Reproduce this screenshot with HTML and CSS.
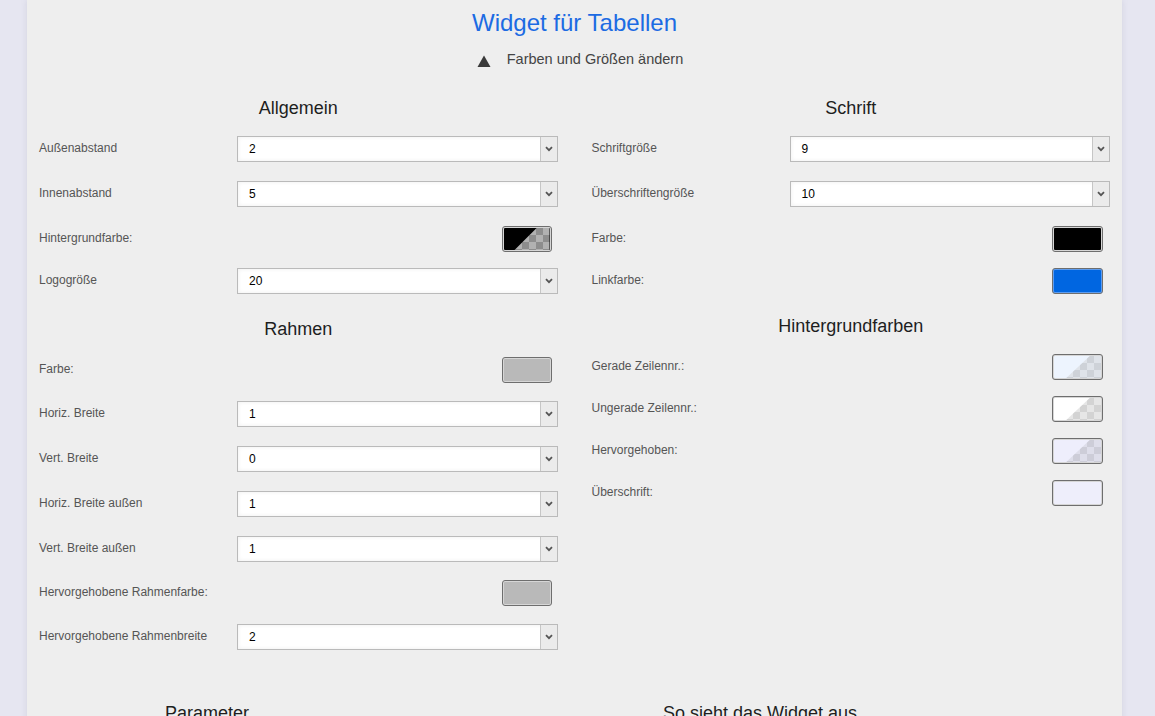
FILE: index.html
```html
<!DOCTYPE html>
<html lang="de">
<head>
<meta charset="utf-8">
<title>Widget für Tabellen</title>
<link rel="stylesheet" href="styles.css">
</head>
<body>
<div class="panel">
  <h1 class="title">Widget für Tabellen</h1>
  <div class="toggle"><svg class="toggle-arrow" width="14" height="12" viewBox="0 0 14 12"><polygon points="7,0.5 13.5,12 0.5,12" fill="#3a3a3a"/></svg><span>Farben und Größen ändern</span></div>

  <div class="columns">
    <div class="col">
      <h2 class="sec">Allgemein</h2>
      <div class="row"><span class="lbl">Außenabstand</span><div class="select"><span class="val">2</span><span class="arrow"><svg width="8" height="6" viewBox="0 0 8 6"><path d="M1 1.2 L4 4.2 L7 1.2" fill="none" stroke="#555" stroke-width="1.8"/></svg></span></div></div>
      <div class="row"><span class="lbl">Innenabstand</span><div class="select"><span class="val">5</span><span class="arrow"><svg width="8" height="6" viewBox="0 0 8 6"><path d="M1 1.2 L4 4.2 L7 1.2" fill="none" stroke="#555" stroke-width="1.8"/></svg></span></div></div>
      <div class="row row--swatch"><span class="lbl">Hintergrundfarbe:</span><div class="swatch"><div class="fill fill--black chk chk--dark"></div></div></div>
      <div class="row"><span class="lbl">Logogröße</span><div class="select"><span class="val">20</span><span class="arrow"><svg width="8" height="6" viewBox="0 0 8 6"><path d="M1 1.2 L4 4.2 L7 1.2" fill="none" stroke="#555" stroke-width="1.8"/></svg></span></div></div>

      <h2 class="sec sec--next">Rahmen</h2>
      <div class="row row--swatch row--g18"><span class="lbl">Farbe:</span><div class="swatch"><div class="fill fill--grey"></div></div></div>
      <div class="row"><span class="lbl">Horiz. Breite</span><div class="select"><span class="val">1</span><span class="arrow"><svg width="8" height="6" viewBox="0 0 8 6"><path d="M1 1.2 L4 4.2 L7 1.2" fill="none" stroke="#555" stroke-width="1.8"/></svg></span></div></div>
      <div class="row"><span class="lbl">Vert. Breite</span><div class="select"><span class="val">0</span><span class="arrow"><svg width="8" height="6" viewBox="0 0 8 6"><path d="M1 1.2 L4 4.2 L7 1.2" fill="none" stroke="#555" stroke-width="1.8"/></svg></span></div></div>
      <div class="row"><span class="lbl">Horiz. Breite außen</span><div class="select"><span class="val">1</span><span class="arrow"><svg width="8" height="6" viewBox="0 0 8 6"><path d="M1 1.2 L4 4.2 L7 1.2" fill="none" stroke="#555" stroke-width="1.8"/></svg></span></div></div>
      <div class="row row--g18"><span class="lbl">Vert. Breite außen</span><div class="select"><span class="val">1</span><span class="arrow"><svg width="8" height="6" viewBox="0 0 8 6"><path d="M1 1.2 L4 4.2 L7 1.2" fill="none" stroke="#555" stroke-width="1.8"/></svg></span></div></div>
      <div class="row row--swatch row--g18"><span class="lbl">Hervorgehobene Rahmenfarbe:</span><div class="swatch"><div class="fill fill--grey"></div></div></div>
      <div class="row"><span class="lbl">Hervorgehobene Rahmenbreite</span><div class="select"><span class="val">2</span><span class="arrow"><svg width="8" height="6" viewBox="0 0 8 6"><path d="M1 1.2 L4 4.2 L7 1.2" fill="none" stroke="#555" stroke-width="1.8"/></svg></span></div></div>
    </div>

    <div class="col">
      <h2 class="sec">Schrift</h2>
      <div class="row"><span class="lbl">Schriftgröße</span><div class="select"><span class="val">9</span><span class="arrow"><svg width="8" height="6" viewBox="0 0 8 6"><path d="M1 1.2 L4 4.2 L7 1.2" fill="none" stroke="#555" stroke-width="1.8"/></svg></span></div></div>
      <div class="row"><span class="lbl">Überschriftengröße</span><div class="select"><span class="val">10</span><span class="arrow"><svg width="8" height="6" viewBox="0 0 8 6"><path d="M1 1.2 L4 4.2 L7 1.2" fill="none" stroke="#555" stroke-width="1.8"/></svg></span></div></div>
      <div class="row row--swatch"><span class="lbl">Farbe:</span><div class="swatch swatch--r"><div class="fill fill--black"></div></div></div>
      <div class="row row--swatch"><span class="lbl">Linkfarbe:</span><div class="swatch swatch--r swatch--blue"><div class="fill fill--blue"></div></div></div>

      <h2 class="sec sec--next">Hintergrundfarben</h2>
      <div class="row row--swatch"><span class="lbl">Gerade Zeilennr.:</span><div class="swatch swatch--r"><div class="fill fill--even chk chk--light"></div></div></div>
      <div class="row row--swatch"><span class="lbl">Ungerade Zeilennr.:</span><div class="swatch swatch--r"><div class="fill fill--white chk chk--light"></div></div></div>
      <div class="row row--swatch"><span class="lbl">Hervorgehoben:</span><div class="swatch swatch--r"><div class="fill fill--lav chk chk--lav"></div></div></div>
      <div class="row row--swatch"><span class="lbl">Überschrift:</span><div class="swatch swatch--r"><div class="fill fill--head"></div></div></div>
    </div>
  </div>

  <div class="bottom">
    <div class="bcol"><h2 class="sec">Parameter</h2></div>
    <div class="bcol"><h2 class="sec">So sieht das Widget aus</h2></div>
  </div>
</div>
</body>
</html>
```

FILE: styles.css
```css
html, body {
  margin: 0;
  padding: 0;
}
body {
  background: #e6e6f1;
  font-family: "Liberation Sans", Arial, sans-serif;
  overflow: hidden;
}
.panel {
  width: 1095px;
  margin: 0 33px 0 27px;
  background: #eeeeee;
  box-shadow: 0 0 6px rgba(120, 120, 150, 0.18);
  padding: 9px 12px 60px;
  box-sizing: border-box;
  min-height: 800px;
}
.title {
  margin: 0;
  font-size: 24px;
  line-height: 28px;
  font-weight: normal;
  color: #1c6be3;
  text-align: center;
}
.toggle {
  margin-top: 14px;
  display: flex;
  justify-content: center;
  align-items: center;
  gap: 16px;
  font-size: 14.5px;
  line-height: 16px;
  color: #444;
  padding-left: 11px;
}
.toggle-arrow {
  display: block;
  position: relative;
  top: 2px;
}
.columns {
  margin-top: 31px;
  display: grid;
  grid-template-columns: 1fr 1fr;
  column-gap: 34px;
}
.col {
  display: flex;
  flex-direction: column;
}
.sec {
  margin: 0 0 17px;
  font-size: 18px;
  line-height: 21px;
  font-weight: normal;
  color: #1e1e1e;
  text-align: center;
}
.sec--next {
  margin-top: 6px;
}
.row {
  display: grid;
  grid-template-columns: 198px 1fr;
  align-items: center;
  height: 26px;
  margin-bottom: 19px;
}
.row--swatch {
  margin-bottom: 16px;
}
.row--g18 {
  margin-bottom: 18px;
}
.lbl {
  font-size: 12px;
  color: #555;
  position: relative;
  top: -1px;
}
.select {
  height: 26px;
  box-sizing: border-box;
  border: 1px solid #bababa;
  background: #fff;
  box-shadow: inset 0 0 4px rgba(0, 0, 0, 0.07);
  display: flex;
  align-items: stretch;
}
.val {
  flex: 1;
  padding-left: 11px;
  font-size: 12px;
  line-height: 24px;
  color: #000;
}
.arrow {
  width: 16px;
  background: #ebebeb;
  border-left: 1px solid #c6c6c6;
  display: flex;
  align-items: center;
  justify-content: center;
}
.swatch {
  justify-self: end;
  margin-right: 6px;
  width: 50px;
  height: 26px;
  box-sizing: border-box;
  border: 1px solid #6e6e6e;
  border-radius: 3px;
  padding: 1px;
  background: #d6d6d6;
}
.swatch--r {
  margin-right: 7px;
  width: 51px;
}
.swatch--blue {
  background: #5c9cf0;
}
.fill {
  height: 100%;
  position: relative;
  border-radius: 1px;
}
.fill--black { background: #000; }
.fill--grey { background: #b9b9b9; }
.fill--blue { background: #0066e1; }
.fill--even { background: #edf4fe; }
.fill--white { background: #ffffff; }
.fill--lav { background: #eeeefc; }
.fill--head { background: #eeeefb; }
.chk::after {
  content: "";
  position: absolute;
  inset: 0;
  background-size: 14px 14px;
  background-position: right top;
  clip-path: polygon(24% 100%, 72% 0, 100% 0, 100% 100%);
}
.chk--dark::after {
  background-image: conic-gradient(#b1b1b1 25%, #8d8d8d 0 50%, #b1b1b1 0 75%, #8d8d8d 0);
}
.chk--light::after {
  clip-path: polygon(26% 100%, 76% 0, 100% 0, 100% 100%);
  background-image: conic-gradient(#e6e6e6 25%, #d3d3d3 0 50%, #e6e6e6 0 75%, #d3d3d3 0);
}
.fill--even.chk--light::after {
  background-image: conic-gradient(#dfe3e9 25%, #ced2d8 0 50%, #dfe3e9 0 75%, #ced2d8 0);
}
.chk--lav::after {
  clip-path: polygon(26% 100%, 76% 0, 100% 0, 100% 100%);
  background-image: conic-gradient(#dedeea 25%, #cdcdd8 0 50%, #dedeea 0 75%, #cdcdd8 0);
}
.bottom {
  margin-top: 34px;
  display: grid;
  grid-template-columns: 336px 1fr;
  column-gap: 35px;
}
```
